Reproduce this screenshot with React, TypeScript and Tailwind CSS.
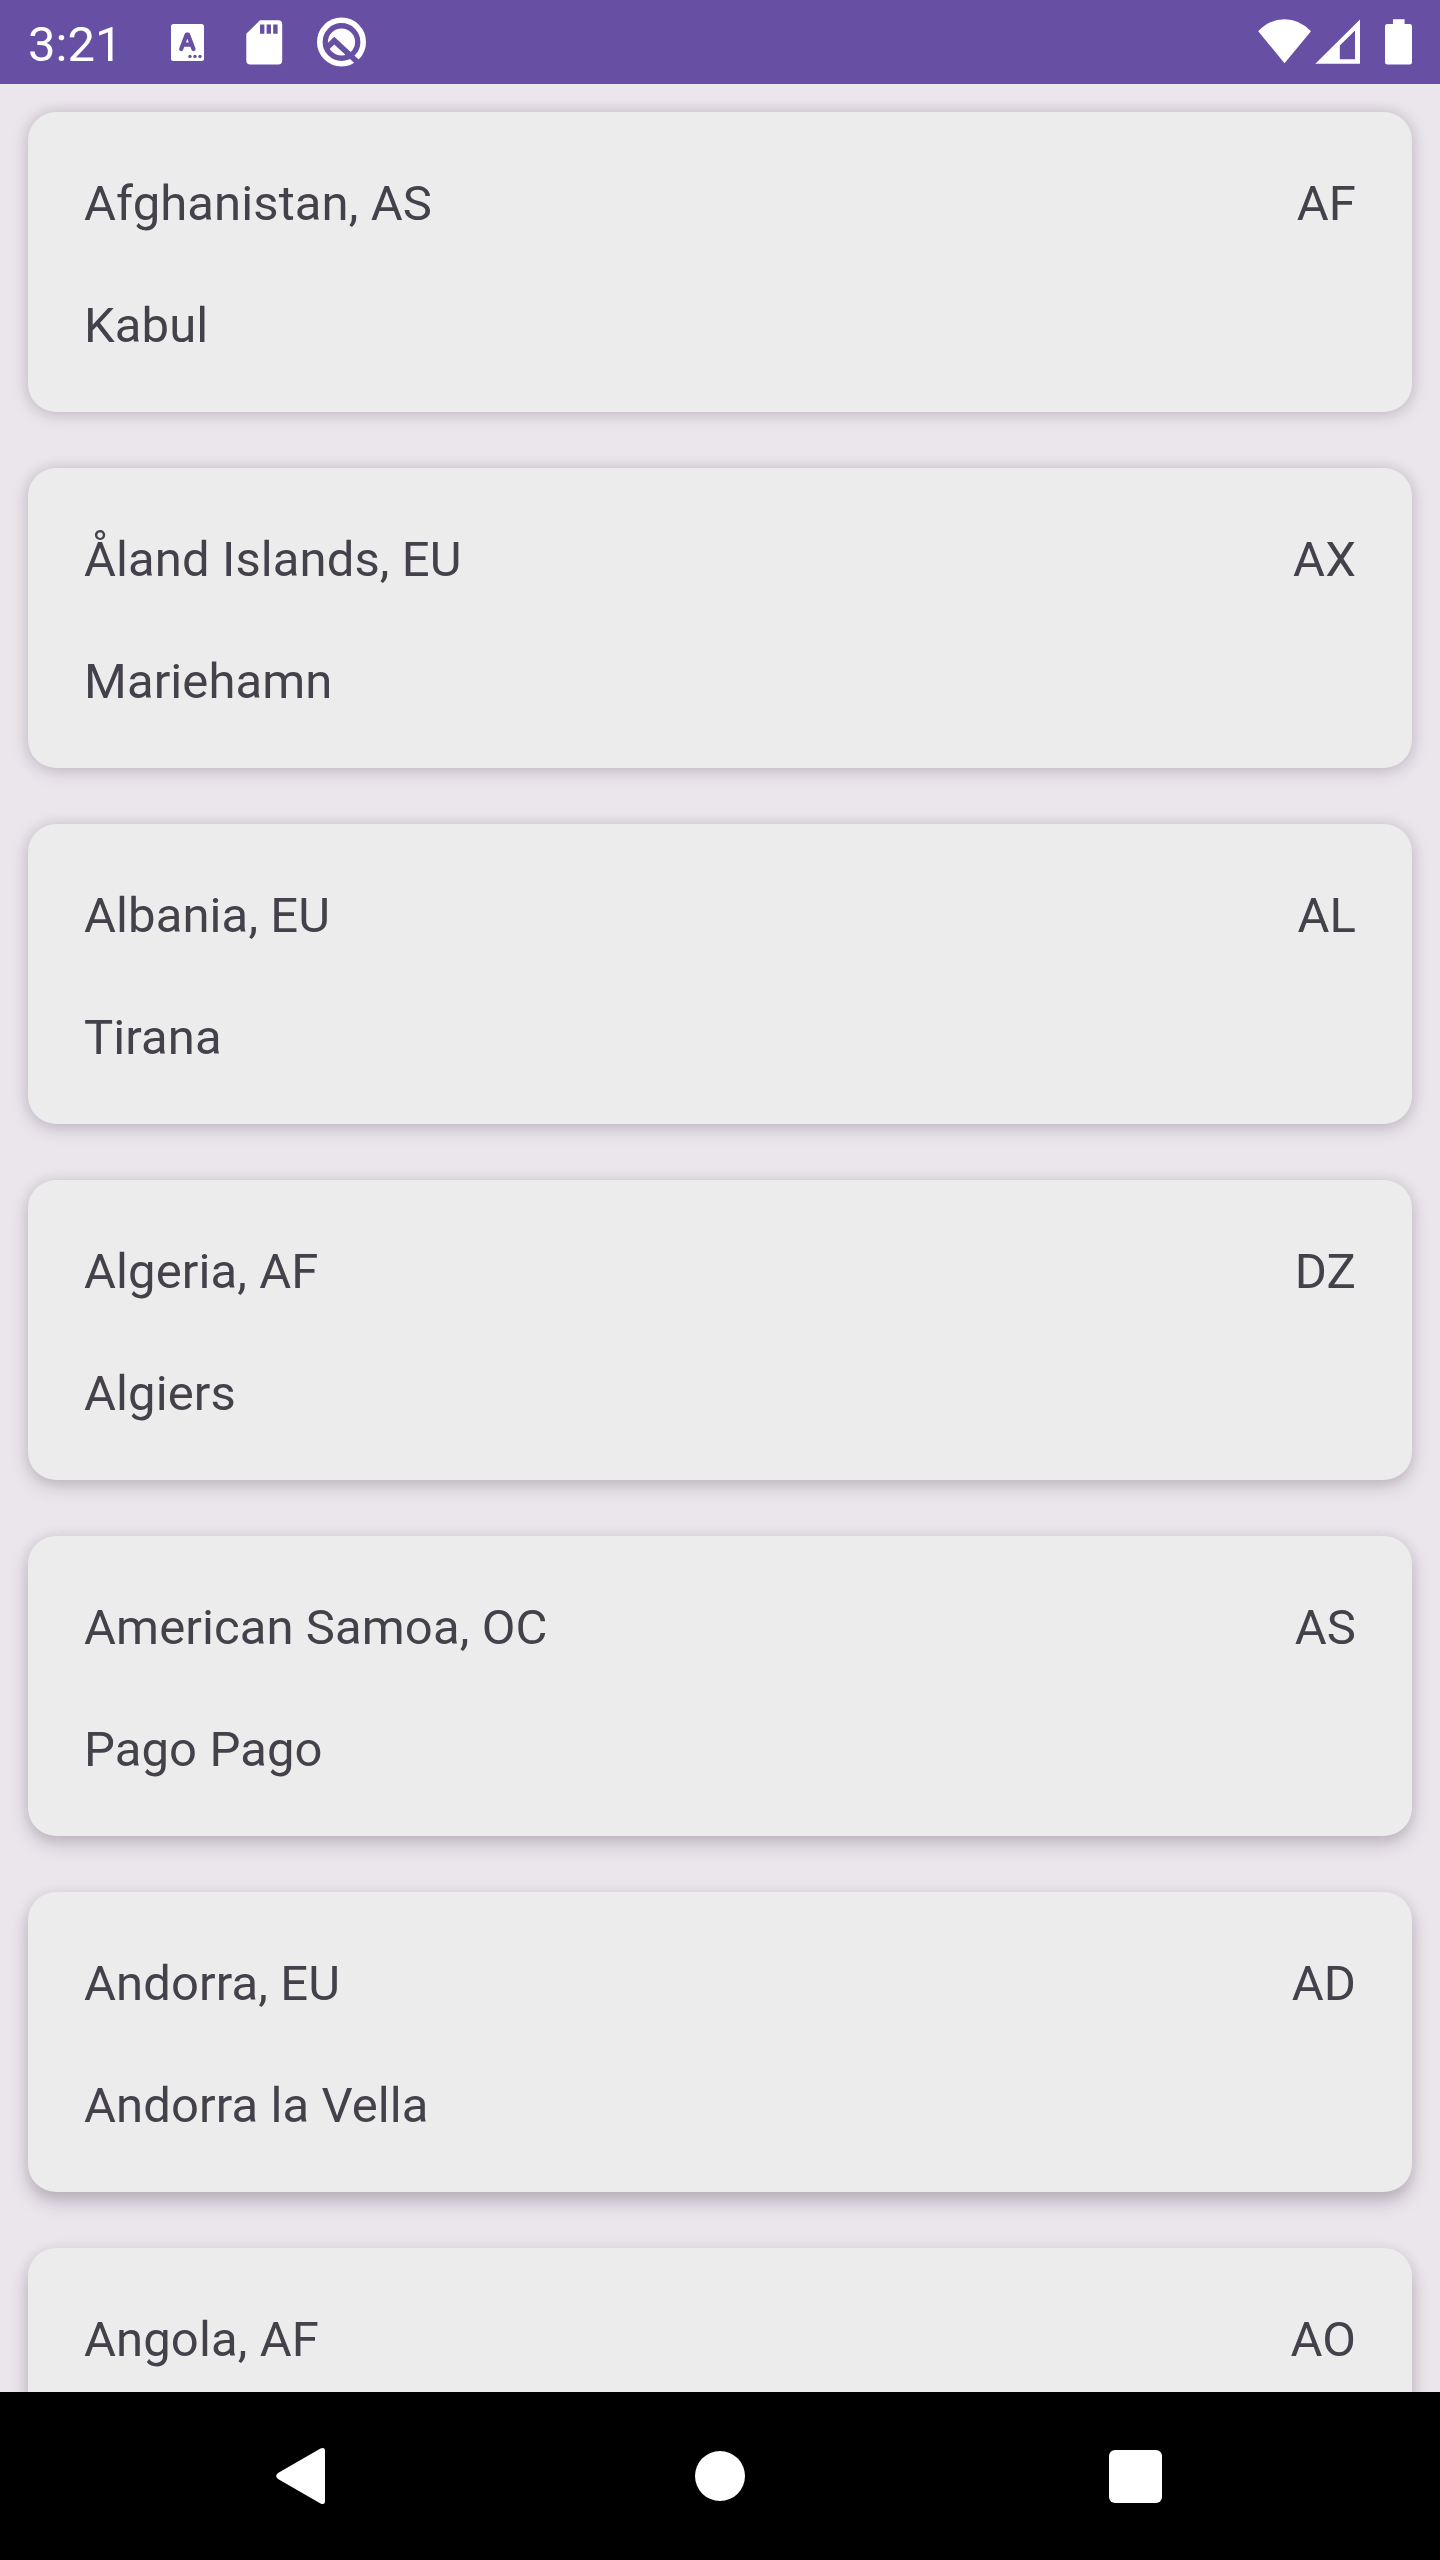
const countries = [
  { name: "Afghanistan, AS", code: "AF", capital: "Kabul", shadow: "shadow-[0_0_14px_rgba(40,20,45,0.12),0_3px_18px_rgba(40,20,45,0.14)]" },
  { name: "Åland Islands, EU", code: "AX", capital: "Mariehamn", shadow: "shadow-[0_0_14px_rgba(40,20,45,0.11),0_4px_18px_rgba(40,20,45,0.15)]" },
  { name: "Albania, EU", code: "AL", capital: "Tirana", shadow: "shadow-[0_0_14px_rgba(40,20,45,0.1),0_5px_18px_rgba(40,20,45,0.17)]" },
  { name: "Algeria, AF", code: "DZ", capital: "Algiers", shadow: "shadow-[0_0_14px_rgba(40,20,45,0.09),0_7px_18px_rgba(40,20,45,0.19)]" },
  { name: "American Samoa, OC", code: "AS", capital: "Pago Pago", shadow: "shadow-[0_0_14px_rgba(40,20,45,0.08),0_8px_18px_rgba(40,20,45,0.21)]" },
  { name: "Andorra, EU", code: "AD", capital: "Andorra la Vella", shadow: "shadow-[0_0_14px_rgba(40,20,45,0.07),0_10px_18px_rgba(40,20,45,0.24)]" },
  { name: "Angola, AF", code: "AO", capital: "", shadow: "shadow-[0_0_14px_rgba(40,20,45,0.07),0_11px_18px_rgba(40,20,45,0.24)]" },
];

function KeyboardIcon() {
  return (
    <svg className="ml-[54px] shrink-0" width="35" height="84" viewBox="170 0 35 84">
      <rect x="171" y="24" width="33" height="37" rx="2.5" fill="#fff" />
      <path d="M181.2 49 186.7 34.6H188L193.5 49M183.3 44.6H191.4" fill="none" stroke="#6750a3" strokeWidth="4.2" strokeLinecap="round" strokeLinejoin="round" />
      <g fill="#6750a3">
        <circle cx="190" cy="56.4" r="1.7" />
        <circle cx="195" cy="56.4" r="1.7" />
        <circle cx="200" cy="56.4" r="1.7" />
      </g>
    </svg>
  );
}

function SdCardIcon() {
  return (
    <svg className="ml-[41px] shrink-0" width="37" height="84" viewBox="246 0 37 84">
      <path d="M260 20.2H278.2a4 4 0 0 1 4 4V60.4a4 4 0 0 1-4 4H250.3a4 4 0 0 1-4-4V33.8Z" fill="#fff" />
      <path d="M260 24.4h4.4v9.3H260zM266.6 24.4h4.4v9.3h-4.4zM273.2 24.4h4.4v9.3h-4.4z" fill="#6750a3" />
    </svg>
  );
}

function RingIcon() {
  return (
    <svg className="ml-[33px] shrink-0" width="52" height="84" viewBox="316 0 52 84">
      <circle cx="341.5" cy="42" r="21.7" fill="none" stroke="#fff" strokeWidth="5.6" />
      <circle cx="341.5" cy="42" r="13.6" fill="#fff" />
      <path d="M326 48.5 334.3 40.7 361 65.5" fill="none" stroke="#6750a3" strokeWidth="5.6" />
    </svg>
  );
}

function StatusBar() {
  return (
    <header className="flex h-[84px] shrink-0 items-center justify-between bg-[#6750a3] px-7 text-white">
      <div className="flex items-center">
        <span className="w-[88px] pt-[5px] text-[49px] leading-[58px] whitespace-nowrap">3:21</span>
        <KeyboardIcon />
        <SdCardIcon />
        <RingIcon />
      </div>
      <svg width="156" height="84" viewBox="1256 0 156 84" fill="#fff">
        <path d="M1258.2 31.2Q1269.5 19.2 1284.5 19.2T1311 31.2L1284.5 63.3Z" />
        <path fillRule="evenodd" d="M1315.3 63.7 1360 19.6V63.7ZM1339.8 59.3H1355V30.6L1339.8 45.6Z" />
        <path d="M1393 19.3h11.6v4.6h5a2.4 2.4 0 0 1 2.4 2.4v35.9a2.4 2.4 0 0 1-2.4 2.4h-22.2a2.4 2.4 0 0 1-2.4-2.4V26.3a2.4 2.4 0 0 1 2.4-2.4h5.6Z" />
      </svg>
    </header>
  );
}

function NavigationBar() {
  return (
    <nav className="z-10 grid h-[168px] shrink-0 grid-cols-[255px_1fr_255px] items-center bg-black px-[178px]">
      <svg className="ml-[97px]" width="52" height="60" viewBox="275 2446 52 60" fill="#fff">
        <path d="M278 2473 320.5 2448.6Q325 2446.7 325 2451V2501Q325 2505.3 320.5 2503.4L278 2479Q274.4 2476 278 2473Z" />
      </svg>
      <div className="size-[50px] justify-self-center rounded-full bg-white" />
      <div className="mr-[100.5px] size-[53px] justify-self-end rounded-[6px] bg-white" />
    </nav>
  );
}

export default function App() {
  return (
    <div className="flex h-[2560px] w-[1440px] flex-col overflow-hidden bg-[#ebe6ec] font-['Roboto',sans-serif]">
      <StatusBar />
      <main className="flex min-h-0 flex-1 flex-col gap-14 overflow-hidden px-7 pt-7">
        {countries.map((c) => (
          <article
            key={c.code}
            className={`flex h-[300px] shrink-0 flex-col gap-14 rounded-[28px] bg-[#ececec] px-14 pt-[59px] text-[49px] leading-[66px] tracking-[0.1px] text-[#45414b] ${c.shadow}`}
          >
            <div className="flex justify-between">
              <span>{c.name}</span>
              <span>{c.code}</span>
            </div>
            {c.capital && <div>{c.capital}</div>}
          </article>
        ))}
      </main>
      <NavigationBar />
    </div>
  );
}
